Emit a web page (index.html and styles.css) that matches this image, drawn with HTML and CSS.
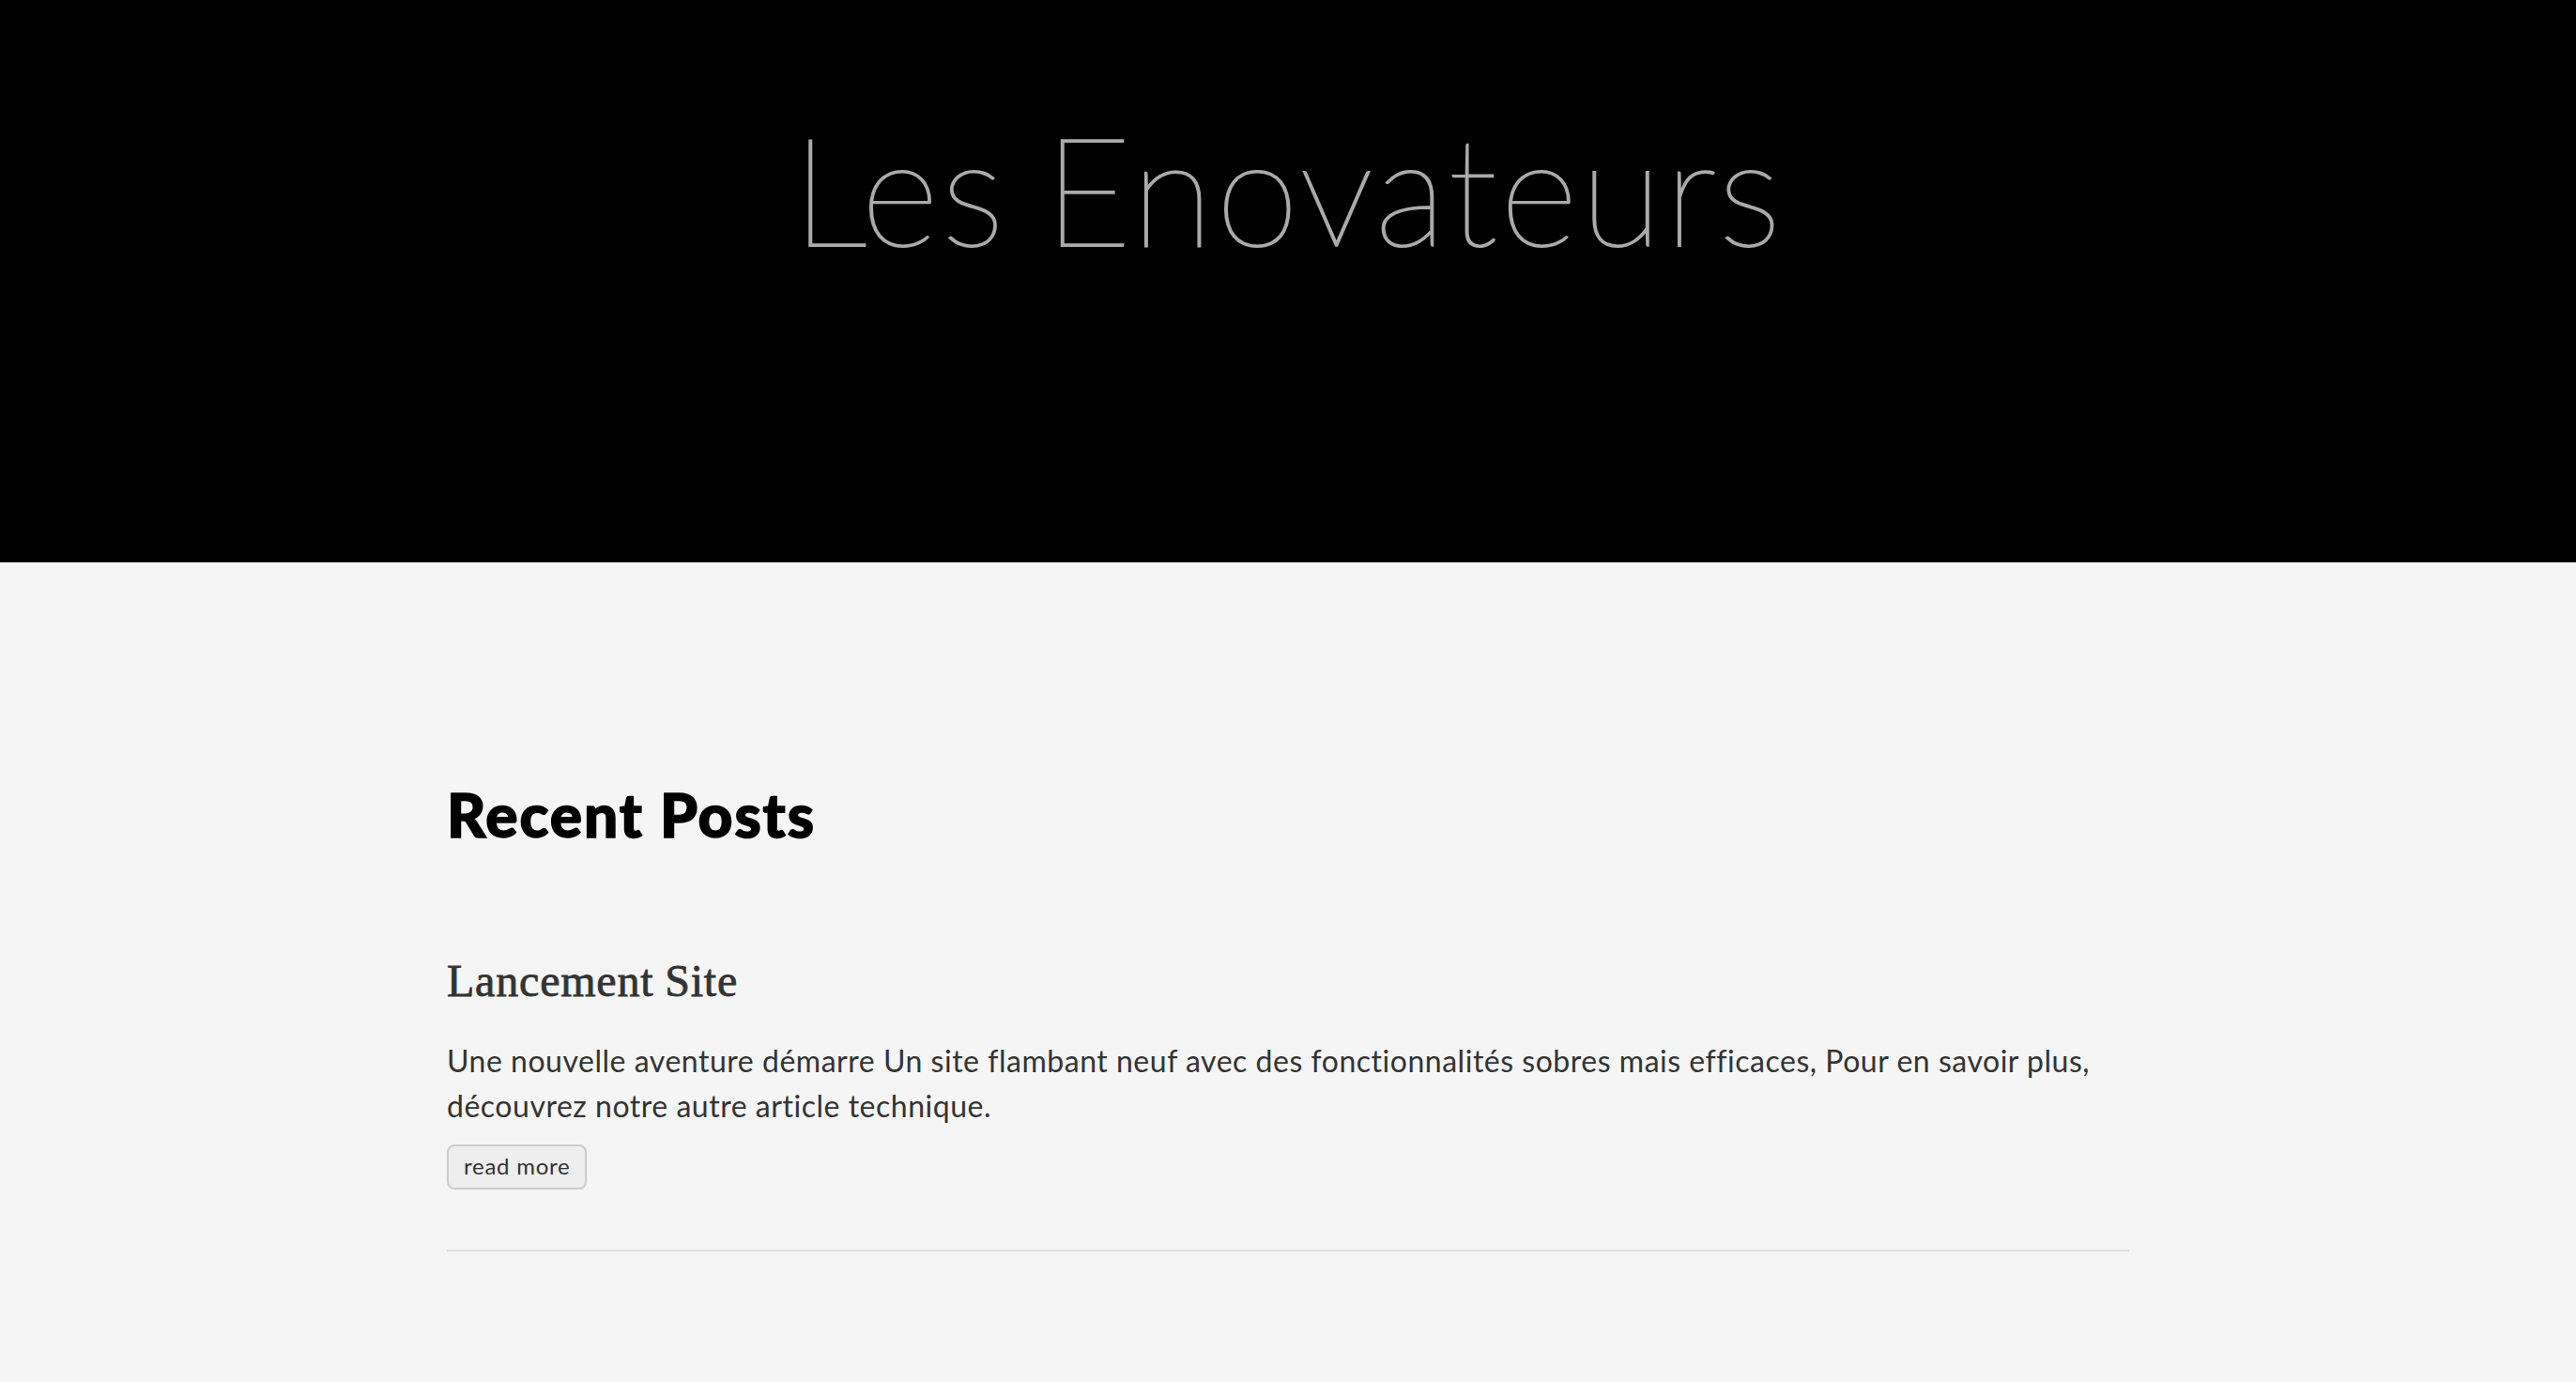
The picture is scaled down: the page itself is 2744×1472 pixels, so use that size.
FILE: index.html
```html
<!DOCTYPE html>
<html lang="fr">
<head>
    <meta charset="UTF-8">
    <meta name="viewport" content="width=device-width, initial-scale=1.0">
    <title>Les Enovateurs</title>
    <link rel="stylesheet" href="styles.css">
</head>
<body>
    <header class="header">
        <h1>Les Enovateurs</h1>
    </header>

    <main class="container">
        <h2 class="section-title">Recent Posts</h2>

        <article class="post">
            <h3 class="post-title">Lancement Site</h3>
            <p class="post-summary">Une nouvelle aventure démarre Un site flambant neuf avec des fonctionnalités sobres mais efficaces, Pour en savoir plus, découvrez notre autre article technique.</p>
            <a class="read-more" href="#">read more</a>
        </article>
    </main>
</body>
</html>
```
FILE: styles.css
```css
* {
    box-sizing: border-box;
    margin: 0;
    padding: 0;
}

body {
    font-family: Lato, sans-serif;
    font-size: 32px;
    line-height: 1.5;
    background: #f5f5f5;
    color: #333;
}

.header {
    height: 599px;
    padding-top: 104px;
    background: #000;
    text-align: center;
}

.header h1 {
    font-size: 160px;
    font-weight: 100;
    line-height: 192px;
    letter-spacing: 3px;
    word-spacing: -9px;
    color: #aaa;
    -webkit-text-stroke: 2px #aaa;
}

.container {
    width: 1792px;
    margin: 0 auto;
    padding-top: 221px;
}

.section-title {
    font-size: 64px;
    font-weight: 900;
    line-height: 96px;
    letter-spacing: 1.9px;
    color: #000;
    -webkit-text-stroke: 1.5px #000;
}

.post {
    margin-top: 97px;
    padding-bottom: 64px;
    border-bottom: 2px solid #ddd;
}

.post-title {
    margin-bottom: 29px;
    font-family: "Liberation Serif", serif;
    font-size: 48px;
    font-weight: 400;
    line-height: 64px;
    letter-spacing: 0.8px;
    word-spacing: -1px;
    -webkit-text-stroke: 0.8px #333;
}

.post-summary {
    margin-bottom: 13px;
    letter-spacing: 0.52px;
}

.read-more {
    display: inline-block;
    height: 48px;
    padding: 0 16px;
    border: 2px solid #ccc;
    border-radius: 8px;
    background: #eee;
    font-size: 24px;
    line-height: 42px;
    letter-spacing: 0.75px;
    color: #333;
    text-decoration: none;
}
```
